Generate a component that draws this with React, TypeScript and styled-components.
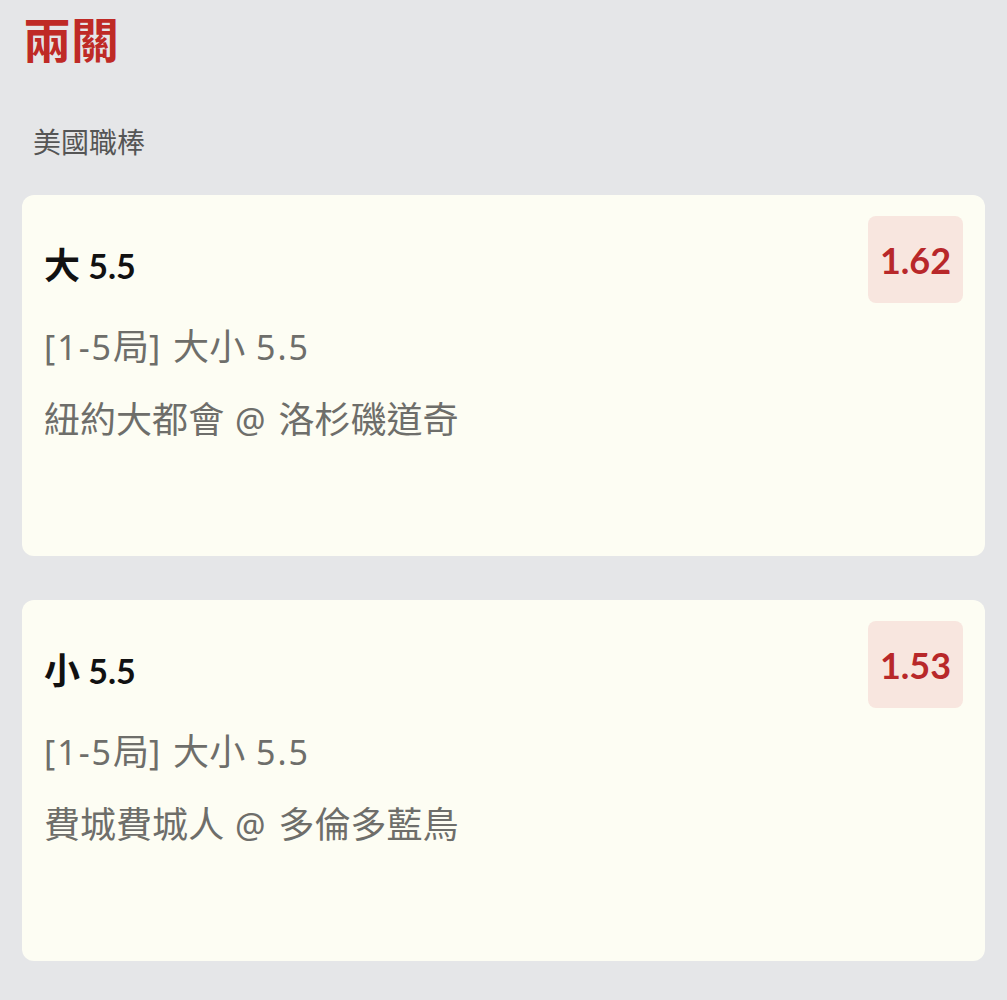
import React from "react";
import styled, { createGlobalStyle } from "styled-components";

const GlobalStyle = createGlobalStyle`
  body {
    margin: 0;
    background: #e5e6e8;
    font-family: Lato, "Noto Sans CJK TC", sans-serif;
  }
`;

interface Bet {
  pick: string;
  odds: string;
  market: string;
  match: string;
}

const bets: Bet[] = [
  { pick: "大 5.5", odds: "1.62", market: "[1-5局] 大小 5.5", match: "紐約大都會 @ 洛杉磯道奇" },
  { pick: "小 5.5", odds: "1.53", market: "[1-5局] 大小 5.5", match: "費城費城人 @ 多倫多藍鳥" },
];

// han glyphs render a touch larger than the latin ones in the design
function Mixed({ text }: { text: string }) {
  const parts = text.split(/([\u3400-\u9fff]+)/);
  return (
    <>
      {parts.map((p, i) =>
        /[\u3400-\u9fff]/.test(p) ? <Han key={i}>{p}</Han> : <React.Fragment key={i}>{p}</React.Fragment>
      )}
    </>
  );
}

function BetCard({ bet }: { bet: Bet }) {
  return (
    <Card>
      <CardHead>
        <Pick>
          <Mixed text={bet.pick} />
        </Pick>
        <Odds>{bet.odds}</Odds>
      </CardHead>
      <Details>
        <Detail>
          <Mixed text={bet.market} />
        </Detail>
        <Detail>
          <Mixed text={bet.match} />
        </Detail>
      </Details>
    </Card>
  );
}

function App() {
  return (
    <Page>
      <GlobalStyle />
      <Title>兩關</Title>
      <League>美國職棒</League>
      <CardList>
        {bets.map((b) => (
          <BetCard key={b.odds} bet={b} />
        ))}
      </CardList>
    </Page>
  );
}

const Page = styled.div`
  padding: 0 22px;
`;

const Title = styled.h1`
  margin: 0 0 0 1px;
  height: 80px;
  line-height: 80px;
  font-size: 48px;
  font-weight: 700;
  color: #bf2a26;
`;

const League = styled.div`
  margin: 42px 0 33px 11px;
  line-height: 40px;
  font-size: 28px;
  color: #555555;
`;

const CardList = styled.div`
  display: flex;
  flex-direction: column;
  gap: 44px;
`;

const Card = styled.div`
  box-sizing: border-box;
  min-height: 361px;
  padding: 21px 22px;
  border-radius: 12px;
  background: #fdfdf3;
`;

const CardHead = styled.div`
  display: flex;
  align-items: center;
  justify-content: space-between;
`;

const Han = styled.span`
  font-size: 1.06em;
  letter-spacing: 0;
  font-family: "Noto Sans CJK TC", sans-serif;
`;

const Pick = styled.div`
  padding-top: 10px;
  font-size: 34px;
  line-height: 44px;
  font-weight: 700;
  color: #111111;
`;

const Odds = styled.div`
  width: 95px;
  height: 87px;
  border-radius: 8px;
  background: #f8e6df;
  display: flex;
  align-items: center;
  justify-content: center;
  font-size: 36px;
  font-weight: 700;
  color: #b8282a;
`;

const Details = styled.div`
  margin-top: 6px;
`;

const Detail = styled.div`
  line-height: 70px;
  font-family: "Noto Sans", "Noto Sans CJK TC", sans-serif;
  font-size: 34px;
  letter-spacing: 2px;
  color: #6e6e6a;
`;

export default App;
